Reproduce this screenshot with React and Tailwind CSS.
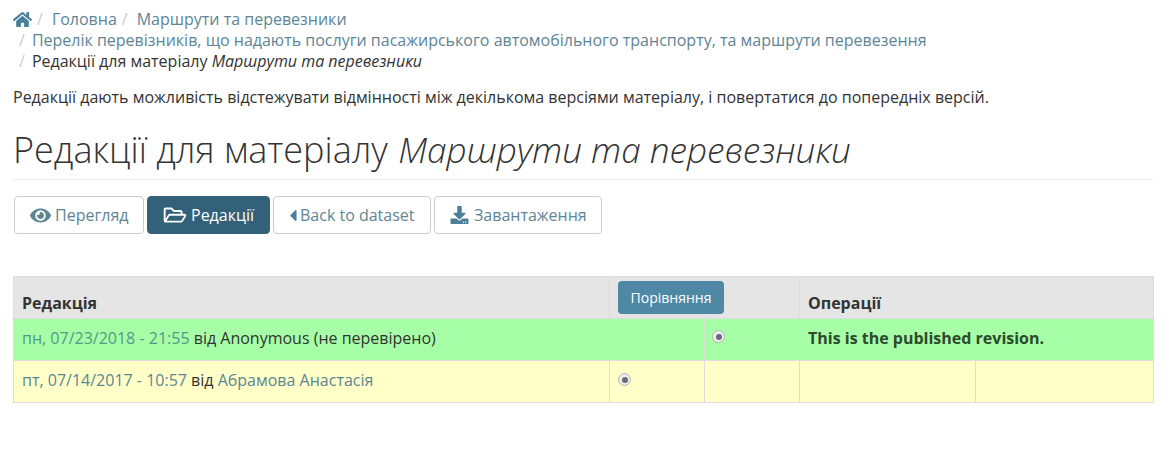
import React from 'react';
import { FaHome, FaEye, FaRegFolderOpen, FaCaretLeft, FaDownload } from 'react-icons/fa';

const LINK = 'text-[#5d8596]';

const Sep = ({ className = '' }) => <span className={`text-[#ccc] ${className}`}>/</span>;

const Tab = ({ icon, label, active, className = '' }) => (
  <a className={`flex items-center h-[38px] rounded-[4px] border text-[16px] ${active ? 'bg-[#34617a] border-[#34617a] text-white' : 'bg-white border-[#ccc] text-[#5d8596]'} ${className}`}>
    {icon}
    <span>{label}</span>
  </a>
);

const Radio = () => (
  <span className="flex w-[13px] h-[13px] items-center justify-center rounded-full border border-[#b5b5b5] bg-[#ececec]">
    <span className="w-[6px] h-[6px] rounded-full bg-[#6a6a78]" />
  </span>
);

const App = () => {
  return (
    <div className="w-[1169px] h-[460px] bg-white pl-[13px] pr-[16px] pt-[9px] overflow-hidden text-[16px] text-[#333] font-['Open_Sans',sans-serif]">
      {/* Breadcrumb */}
      <div className="leading-[21px] h-[63px]">
        <div className="flex items-center">
          <FaHome className="w-[19px] h-[17px] text-[#4a7f99]" />
          <Sep className="ml-[5px]" />
          <span className={`ml-[9px] ${LINK}`}>Головна</span>
          <Sep className="ml-[5px]" />
          <span className={`ml-[9px] ${LINK}`}>Маршрути та перевезники</span>
        </div>
        <div className="flex pl-[6px]">
          <Sep />
          <span className={`ml-[7px] ${LINK}`}>Перелік перевізників, що надають послуги пасажирського автомобільного транспорту, та маршрути перевезення</span>
        </div>
        <div className="flex pl-[6px]">
          <Sep />
          <span className="ml-[7px]">Редакції для матеріалу <em>Маршрути та перевезники</em></span>
        </div>
      </div>

      <p className="mt-[15px] leading-[21px]">Редакції дають можливість відстежувати відмінності між декількома версіями матеріалу, і повертатися до попередніх версій.</p>

      <h1 className="mt-[20px] h-[52px] border-b border-[#eee] text-[36px] leading-[42px] font-light text-[#333]">
        Редакції для матеріалу <em className="ml-[1px] text-[35.2px]">Маршрути та перевезники</em>
      </h1>

      {/* Tabs */}
      <div className="mt-[16px] ml-[1px] flex gap-[3px]">
        <Tab className="w-[130px] pl-[15px]" label="Перегляд" icon={<FaEye className="w-[21px] h-[19px] mr-[4px] text-[#5d8596]" />} />
        <Tab className="w-[123px] pl-[15px]" active label="Редакції" icon={<FaRegFolderOpen className="w-[24px] h-[20px] mr-[4px]" />} />
        <Tab className="w-[158px] pl-[14px]" label="Back to dataset" icon={<FaCaretLeft className="w-[10px] h-[19px] mr-[2px] text-[#4a7f99]" />} />
        <Tab className="w-[168px] pl-[15px]" label="Завантаження" icon={<FaDownload className="w-[19px] h-[18px] mr-[5px] text-[#4a7f99]" />} />
      </div>

      {/* Revisions table */}
      <table className="mt-[42px] w-[1140px] table-fixed border-collapse">
        <colgroup>
          <col className="w-[596px]" />
          <col className="w-[95px]" />
          <col className="w-[95px]" />
          <col className="w-[176px]" />
          <col className="w-[178px]" />
        </colgroup>
        <thead>
          <tr className="h-[42px] bg-[#e5e5e5]">
            <th className="border border-[#ddd] px-[8px] align-bottom pb-[4px] text-left leading-[21px] font-bold">Редакція</th>
            <th colSpan={2} className="border border-[#ddd] px-[8px] align-top pt-[4px] text-left">
              <button className="block h-[33px] w-[106px] rounded-[4px] bg-[#4f88a5] text-center text-[14px] font-normal text-white">Порівняння</button>
            </th>
            <th colSpan={2} className="border border-[#ddd] px-[8px] align-bottom pb-[4px] text-left leading-[21px] font-bold">Операції</th>
          </tr>
        </thead>
        <tbody>
          <tr className="h-[42px] bg-[#a6fea6]">
            <td className="border border-[#ddd] px-[8px] pb-[4px]">
              <span className="text-[#4d9a88]">пн, 07/23/2018 - 21:55</span> від Anonymous (не перевірено)
            </td>
            <td className="border border-[#ddd] px-[8px]" />
            <td className="border border-[#ddd] px-[7px] align-top pt-[11px]"><Radio /></td>
            <td colSpan={2} className="border border-[#ddd] px-[8px] pb-[4px] font-bold text-[#2c4a2c]">This is the published revision.</td>
          </tr>
          <tr className="h-[42px] bg-[#ffffc8]">
            <td className="border border-[#ddd] px-[8px] pb-[4px]">
              <span className={LINK}>пт, 07/14/2017 - 10:57</span> від <span className={LINK}>Абрамова Анастасія</span>
            </td>
            <td className="border border-[#ddd] px-[8px] align-top pt-[12px]"><Radio /></td>
            <td className="border border-[#ddd] px-[8px]" />
            <td className="border border-[#ddd] px-[8px]" />
            <td className="border border-[#ddd] px-[8px]" />
          </tr>
        </tbody>
      </table>
    </div>
  );
};

export default App;
